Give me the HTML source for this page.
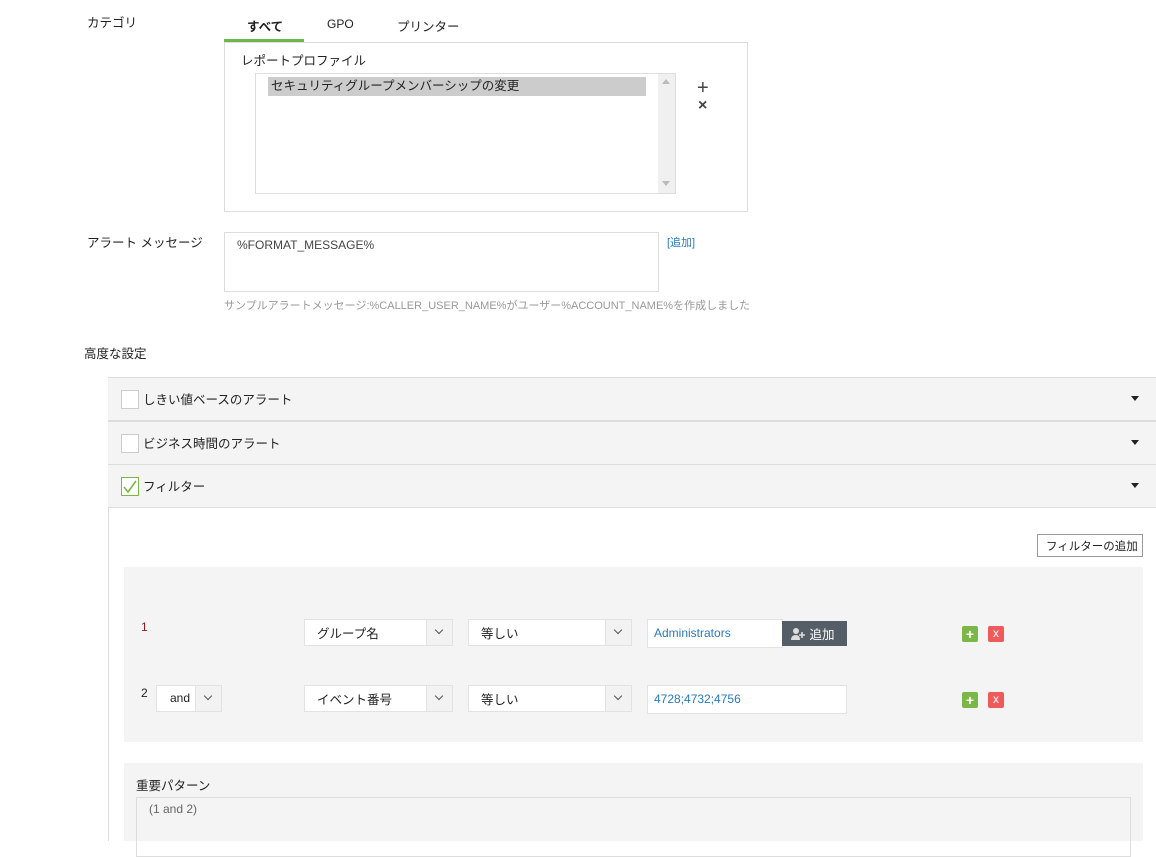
<!DOCTYPE html>
<html><head><meta charset="utf-8"><style>
*{box-sizing:border-box;margin:0;padding:0}
body{width:1156px;height:841px;overflow:hidden;background:#fff;position:relative;font-family:"Liberation Sans","Noto Sans CJK JP",sans-serif;font-size:12.5px;color:#222}
.a{position:absolute;white-space:nowrap}
.sel{position:absolute;background:#fff;border:1px solid #e2e2e2;height:27px}
.sel span{position:absolute;left:12px;top:3px}
.sel i{position:absolute;right:0;top:0;width:26px;height:25px;background:#f2f2f2;border-left:1px solid #e2e2e2}
.sel i:after{content:"";position:absolute;left:9px;top:7px;width:5px;height:5px;border-right:1.5px solid #555;border-bottom:1.5px solid #555;transform:rotate(45deg)}
.row{position:absolute;left:108px;width:1048px;height:44px;background:#f4f4f4;border-top:1px solid #ddd;border-bottom:1px solid #ddd}
.cb{position:absolute;left:13px;top:12px;width:18px;height:19px;background:#fff;border:1px solid #ccc}
.row .t{position:absolute;left:35px;top:11px}
.tri{position:absolute;right:17px;top:18px;width:0;height:0;border-left:4px solid transparent;border-right:4px solid transparent;border-top:5px solid #222}
.pl{position:absolute;width:16px;height:16px;background:#7ab648;border-radius:2px;color:#fff;font-weight:bold;text-align:center;line-height:16px;font-size:14px}
.xx{position:absolute;width:16px;height:16px;background:#ef5b5b;border-radius:2px;color:#fff;text-align:center;line-height:15px;font-size:12px}
</style></head><body>
<div class="a" style="left:87px;top:12px">カテゴリ</div>
<div class="a" style="left:247px;top:16px;font-weight:bold">すべて</div>
<div class="a" style="left:327px;top:17px;font-size:12px">GPO</div>
<div class="a" style="left:397px;top:16px">プリンター</div>
<div class="a" style="left:224px;top:39px;width:80px;height:3px;background:#6fb64a"></div>
<div class="a" style="left:224px;top:42px;width:524px;height:170px;border:1px solid #ddd"></div>
<div class="a" style="left:241px;top:50px">レポートプロファイル</div>
<div class="a" style="left:255px;top:73px;width:421px;height:121px;border:1px solid #ddd"></div>
<div class="a" style="left:658px;top:74px;width:17px;height:119px;background:#f0f0f0"></div>
<div class="a" style="left:662px;top:79px;border-left:4px solid transparent;border-right:4px solid transparent;border-bottom:5px solid #bbb"></div>
<div class="a" style="left:662px;top:181px;border-left:4px solid transparent;border-right:4px solid transparent;border-top:5px solid #bbb"></div>
<div class="a" style="left:268px;top:77px;width:378px;height:19px;background:#ccc;padding-left:3px;line-height:18px">セキュリティグループメンバーシップの変更</div>
<div class="a" style="left:697px;top:78px;font-size:20px;color:#444;line-height:20px">+</div>
<div class="a" style="left:698px;top:97px;font-size:16px;color:#444;font-weight:bold">×</div>
<div class="a" style="left:87px;top:232px">アラート メッセージ</div>
<div class="a" style="left:224px;top:232px;width:435px;height:60px;border:1px solid #ddd;padding:5px 12px;font-size:12px;color:#444">%FORMAT_MESSAGE%</div>
<div class="a" style="left:667px;top:234px;font-size:11px;color:#2a7ab8">[追加]</div>
<div class="a" style="left:224px;top:297px;font-size:11px;color:#999">サンプルアラートメッセージ:%CALLER_USER_NAME%がユーザー%ACCOUNT_NAME%を作成しました</div>
<div class="a" style="left:84px;top:343px">高度な設定</div>
<div class="row" style="top:377px"><div class="cb"></div><div class="t">しきい値ベースのアラート</div><div class="tri"></div></div>
<div class="row" style="top:421px"><div class="cb"></div><div class="t">ビジネス時間のアラート</div><div class="tri"></div></div>
<div class="row" style="top:464px"><div class="cb" style="border-color:#7ab648"><svg width="16" height="17" style="position:absolute;left:0;top:0"><path d="M2 9 L6 14 L14 3" stroke="#7ab648" stroke-width="1.6" fill="none"/></svg></div><div class="t">フィルター</div><div class="tri"></div></div>
<div class="a" style="left:108px;top:507px;width:1px;height:334px;background:#ddd"></div>
<div class="a" style="left:1037px;top:534px;width:106px;height:23px;border:1px solid #999;font-size:11.5px;padding:3px 0 0 8px">フィルターの追加</div>
<div class="a" style="left:124px;top:567px;width:1019px;height:175px;background:#f4f4f4"></div>
<div class="a" style="left:141px;top:620px;font-size:12px;color:#8b1a1a">1</div>
<div class="sel" style="left:304px;top:619px;width:149px"><span>グループ名</span><i></i></div>
<div class="sel" style="left:468px;top:619px;width:164px"><span>等しい</span><i></i></div>
<div class="a" style="left:647px;top:619px;width:136px;height:29px;background:#fff;border:1px solid #e2e2e2;padding:6px 0 0 6px;font-size:12px;color:#2a7ab8">Administrators</div>
<div class="a" style="left:782px;top:621px;width:65px;height:25px;background:#555e66;color:#fff;padding:3px 0 0 8px"><svg width="16" height="14" style="vertical-align:-2px"><circle cx="6" cy="4" r="3" fill="#ddd"/><path d="M1 13 Q1 8 6 8 Q10 8 10 13Z" fill="#ddd"/><path d="M12 5v6M9 8h6" stroke="#ddd" stroke-width="1.6"/></svg> 追加</div>
<div class="pl" style="left:962px;top:626px">+</div>
<div class="xx" style="left:988px;top:626px">x</div>
<div class="a" style="left:141px;top:686px;font-size:12px">2</div>
<div class="sel" style="left:156px;top:685px;width:66px"><span style="left:13px;font-size:12px;top:5px">and</span><i></i></div>
<div class="sel" style="left:304px;top:685px;width:149px"><span>イベント番号</span><i></i></div>
<div class="sel" style="left:468px;top:685px;width:164px"><span>等しい</span><i></i></div>
<div class="a" style="left:647px;top:685px;width:200px;height:29px;background:#fff;border:1px solid #e2e2e2;padding:6px 0 0 6px;font-size:12px;color:#2a7ab8">4728;4732;4756</div>
<div class="pl" style="left:962px;top:692px">+</div>
<div class="xx" style="left:988px;top:692px">x</div>
<div class="a" style="left:124px;top:763px;width:1019px;height:78px;background:#f4f4f4"></div>
<div class="a" style="left:136px;top:775px">重要パターン</div>
<div class="a" style="left:136px;top:797px;width:995px;height:60px;border:1px solid #ddd;padding:4px 12px;font-size:12px;color:#666">(1 and 2)</div>
</body></html>
